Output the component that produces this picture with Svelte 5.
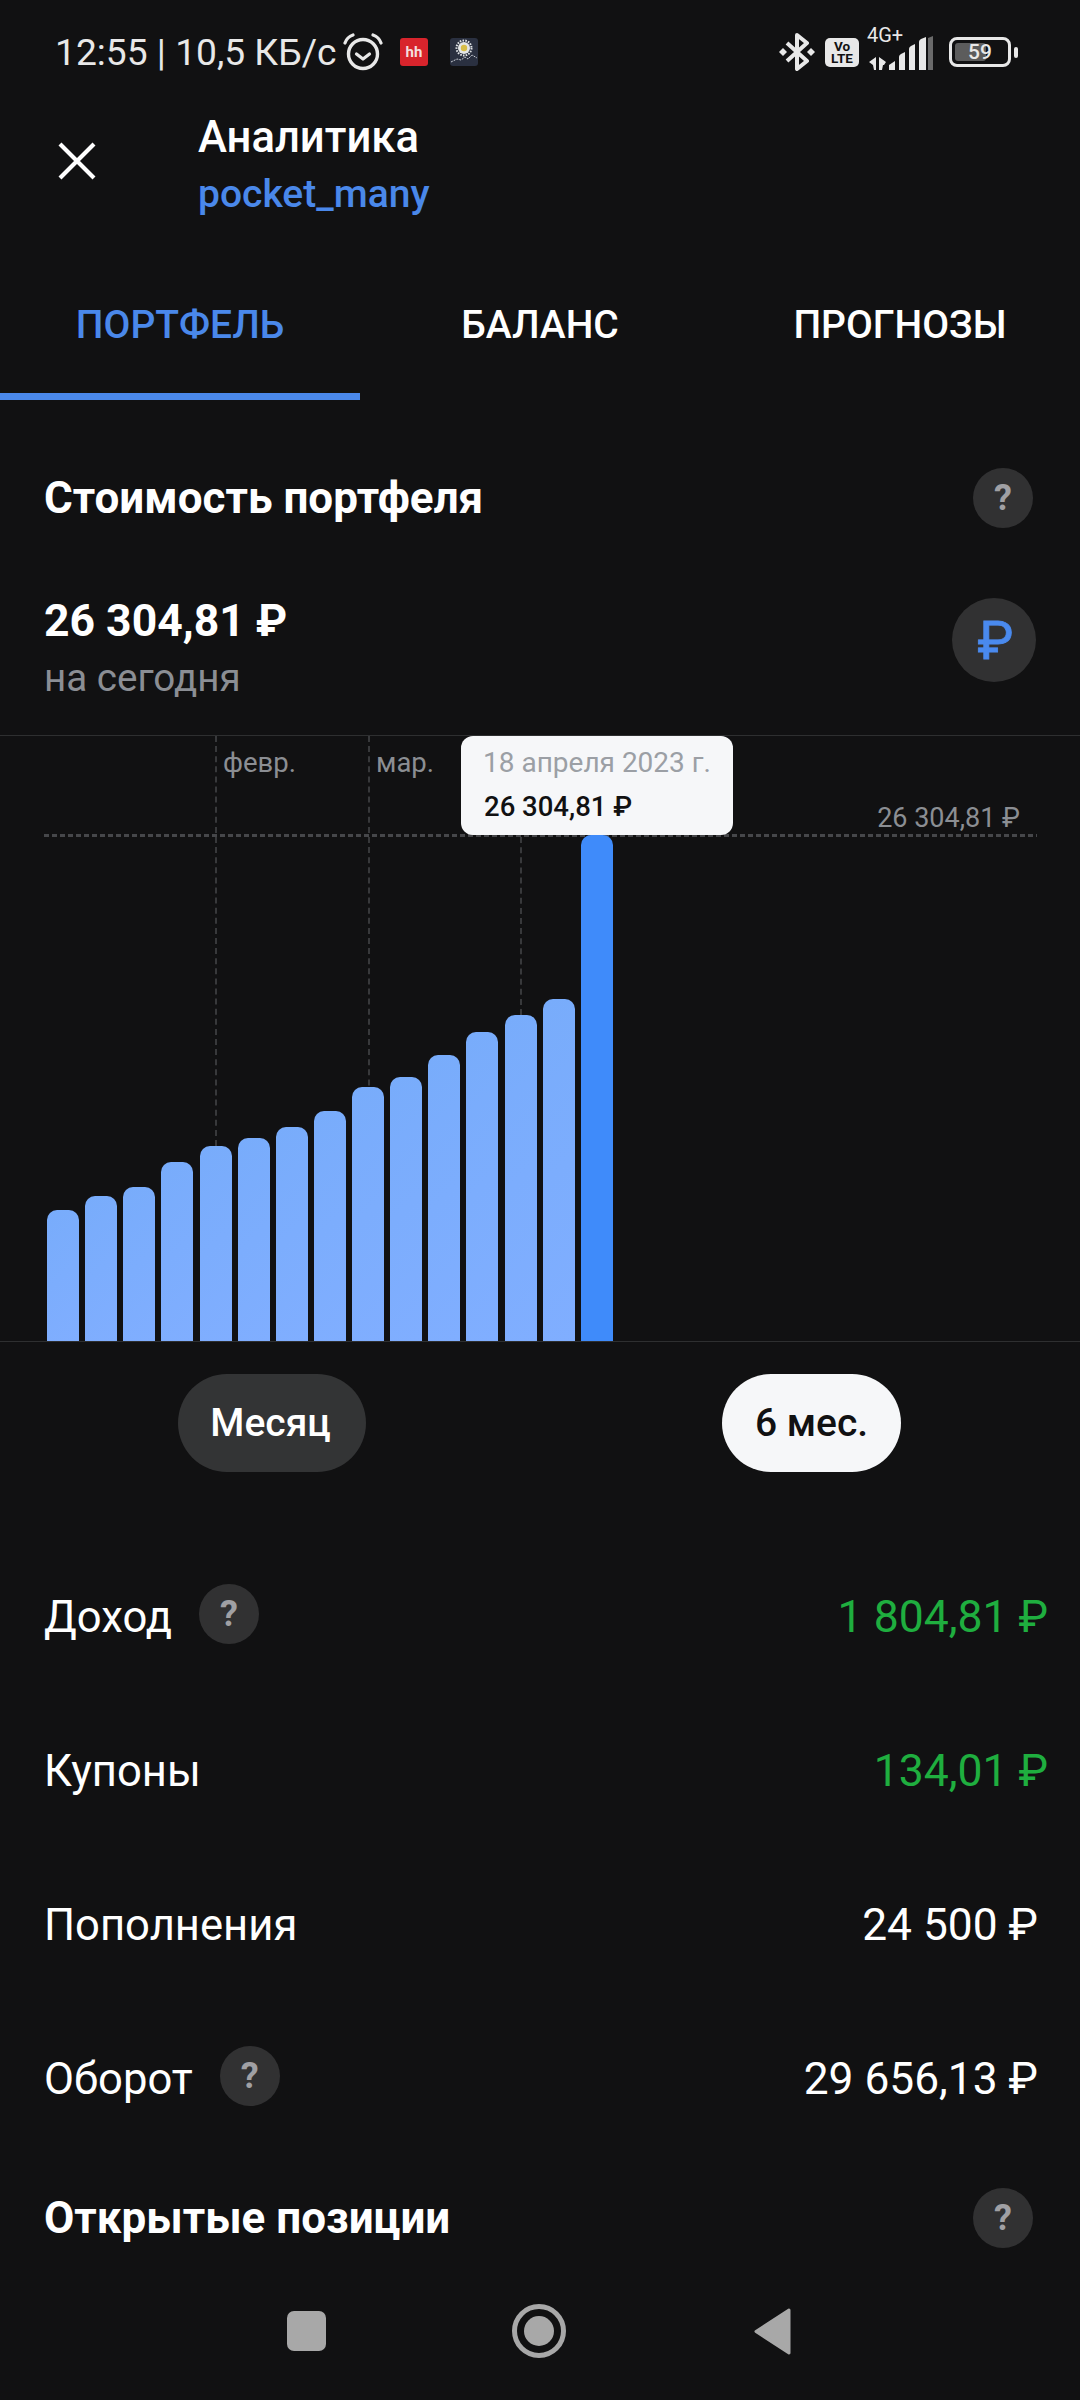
<script>
  const bars = [131, 145, 154, 179, 195, 203, 214, 230, 254, 264, 286, 309, 326, 342, 506];
  const rows = [
    { label: 'Доход', value: '1 804,81 ₽', help: true, green: true },
    { label: 'Купоны', value: '134,01 ₽', green: true },
    { label: 'Пополнения', value: '24 500 ₽' },
    { label: 'Оборот', value: '29 656,13 ₽', help: true }
  ];
  const vlines = [
    { x: 215, h: 410, label: 'февр.' },
    { x: 368, h: 410, label: 'мар.' },
    { x: 520, h: 279, label: '' }
  ];
</script>

<div class="screen">
  <div class="status">
    <span class="clock">12:55 | 10,5 КБ/с</span>
    <svg class="alarm" viewBox="0 0 40 38" width="40" height="38">
      <circle cx="20" cy="21" r="14.5" fill="none" stroke="#e8e8e8" stroke-width="3.4" />
      <path d="M13.5 21l6.5 5 6.5-5" fill="none" stroke="#e8e8e8" stroke-width="3.2" stroke-linecap="round" stroke-linejoin="round" />
      <path d="M2 10Q4 4 10 2M38 10Q36 4 30 2" fill="none" stroke="#e8e8e8" stroke-width="3.2" stroke-linecap="round" />
    </svg>
    <span class="hh">hh</span>
    <svg class="daisy" viewBox="0 0 28 28" width="28" height="28">
      <rect width="28" height="28" rx="3" fill="#2a3040" />
      <circle cx="14" cy="10" r="6" fill="#e4e6e6" />
      <circle cx="14" cy="10" r="7.500" fill="none" stroke="#dfe2e4" stroke-width="2" stroke-dasharray="1.600 1.200" />
      <circle cx="14" cy="10" r="3.200" fill="#d7bd47" />
      <path d="M1 24l6-3 4 1 4-3 3 2 4-4 5 3" fill="none" stroke="#c8ccd4" stroke-width="1" stroke-dasharray="2 1" />
    </svg>
    <span class="spacer"></span>
    <svg class="bt" viewBox="0 0 36 38" width="36" height="38">
      <path d="M8 10l20 18-10 8V2l10 8L8 28" fill="none" stroke="#e8e8e8" stroke-width="4" stroke-linejoin="round" />
      <path d="M0 19l4-4 4 4-4 4zM28 19l4-4 4 4-4 4z" fill="#e8e8e8" />
    </svg>
    <span class="volte">Vo<br />LTE</span>
    <div class="net">
      <span class="net-text">4G+</span>
      <svg viewBox="0 0 68 34" width="68" height="34" class="signal">
        <path d="M2 26l7-5v13H7l-1-5zM12 21l7 5-2 3h-1l-1 5h-3z" fill="#e8e8e8" />
        <path d="M22 34v-5l6-4v9zM32 34V21q0-2 2-3l4-2v18zM42 34V13q0-2 2-3l4-2v26zM52 34V6q0-2 2-3l5-2v33z" fill="#e8e8e8" />
        <path d="M61 34V2l5-2v34z" fill="#6a6a6a" />
      </svg>
    </div>
    <div class="battery"><span class="fill"></span><span class="pct">59</span></div>
    <span class="nub"></span>
  </div>

  <header class="head">
    <svg class="close" viewBox="0 0 38 38" width="38" height="38">
      <path d="M2 2l34 34M36 2L2 36" stroke="#fff" stroke-width="4.200" fill="none" />
    </svg>
    <div class="titles">
      <div class="title">Аналитика</div>
      <div class="sub">pocket_many</div>
    </div>
  </header>

  <nav class="tabs">
    <div class="tab active">ПОРТФЕЛЬ</div>
    <div class="tab">БАЛАНС</div>
    <div class="tab">ПРОГНОЗЫ</div>
  </nav>

  <section class="sec-title">
    <h2>Стоимость портфеля</h2>
    <span class="q">?</span>
  </section>

  <section class="total">
    <div>
      <div class="sum">26 304,81 ₽</div>
      <div class="today">на сегодня</div>
    </div>
    <span class="rub">₽</span>
  </section>

  <section class="chart">
    {#each vlines as l}
      <span class="vline" style="left:{l.x}px;height:{l.h}px"></span>
      {#if l.label}<span class="mon" style="left:{l.x + 8}px">{l.label}</span>{/if}
    {/each}
    <span class="hline"></span>
    <span class="axis-val">26 304,81 ₽</span>
    <div class="bars">
      {#each bars as h, i}
        <span class="bar" class:last={i === bars.length - 1} style="height:{h}px"></span>
      {/each}
    </div>
    <div class="tip">
      <div class="tip-date">18 апреля 2023 г.</div>
      <div class="tip-val">26 304,81 ₽</div>
    </div>
  </section>

  <div class="periods">
    <button class="pill dark">Месяц</button>
    <button class="pill light">6 мес.</button>
  </div>

  <section class="rows">
    {#each rows as r}
      <div class="row">
        <span class="row-label">{r.label}</span>
        {#if r.help}<span class="q small">?</span>{/if}
        <span class="row-val" class:green={r.green}>{r.value}</span>
      </div>
    {/each}
  </section>

  <section class="open">
    <h2>Открытые позиции</h2>
    <span class="q">?</span>
  </section>

  <footer class="navbar">
    <span class="sq"></span>
    <span class="home"><span></span></span>
    <svg viewBox="0 0 38 47" width="38" height="47">
      <path d="M35 2L2 23.500 35 45z" fill="#a8a8a8" stroke="#a8a8a8" stroke-width="3" stroke-linejoin="round" />
    </svg>
  </footer>
</div>

<style>
  :global(body) {
    margin: 0;
    background: #111112;
  }
  .screen {
    width: 1080px;
    height: 2400px;
    overflow: hidden;
    background: #111112;
    color: #fff;
    font-family: Roboto, "Noto Sans", sans-serif;
  }
  .status {
    height: 104px;
    display: flex;
    align-items: center;
    padding: 0 62px 0 55px;
    box-sizing: border-box;
    color: #e8e8e8;
  }
  .clock {
    font-size: 37.200px;
    white-space: nowrap;
    width: 288px;
  }
  .alarm { margin-right: 17px; }
  .hh {
    width: 28px;
    height: 28px;
    border-radius: 3px;
    background: #d8242c;
    color: #f4dede;
    font-size: 15px;
    font-weight: 700;
    display: flex;
    align-items: center;
    justify-content: center;
    margin-right: 22px;
  }
  .spacer { flex: 1; }
  .bt { margin-right: 10px; }
  .volte {
    width: 34px;
    height: 29px;
    border-radius: 5px;
    background: #e8e8e8;
    color: #111112;
    font-size: 13.500px;
    line-height: 12.500px;
    font-weight: 700;
    text-align: center;
    padding-top: 2px;
    box-sizing: border-box;
    margin-right: 8px;
  }
  .net {
    position: relative;
    width: 68px;
    height: 40px;
    margin-right: 14px;
  }
  .net-text {
    position: absolute;
    left: 0;
    top: -7px;
    font-size: 20px;
    line-height: 20px;
  }
  .signal {
    position: absolute;
    left: 0;
    top: 4px;
  }
  .battery {
    position: relative;
    width: 62px;
    height: 30px;
    box-sizing: border-box;
    border: 3px solid #e8e8e8;
    border-radius: 8px;
  }
  .fill {
    position: absolute;
    left: 3px;
    top: 3px;
    bottom: 3px;
    width: 31px;
    background: #5c5c5c;
    border-radius: 3px;
  }
  .pct {
    position: absolute;
    inset: 0;
    text-align: center;
    font-size: 21px;
    line-height: 24px;
    font-weight: 500;
  }
  .nub {
    width: 4px;
    height: 11px;
    margin-left: 3px;
    border-radius: 2px;
    background: #e8e8e8;
  }
  .head {
    height: 152px;
    display: flex;
    align-items: flex-start;
    box-sizing: border-box;
    padding-left: 58px;
  }
  .close { margin-top: 38px; }
  .titles { margin-left: 102px; }
  .title {
    font-size: 43.600px;
    font-weight: 500;
    line-height: 50px;
    margin-top: 9px;
  }
  .sub {
    font-size: 39px;
    font-weight: 500;
    line-height: 46px;
    margin-top: 8px;
    color: #4a88ea;
  }
  .tabs {
    height: 144px;
    display: grid;
    grid-template-columns: repeat(3, 360px);
  }
  .tab {
    font-size: 39px;
    font-weight: 500;
    text-align: center;
    line-height: 44px;
    padding-top: 47px;
    box-sizing: border-box;
  }
  .tab.active {
    color: #4a88ea;
    border-bottom: 7px solid #4a88ea;
  }
  .sec-title {
    height: 60px;
    margin-top: 68px;
    display: flex;
    align-items: center;
    justify-content: space-between;
    padding: 0 47px 0 44px;
  }
  h2 {
    margin: 0;
    font-size: 44px;
    font-weight: 700;
    line-height: 50px;
  }
  .q {
    width: 60px;
    height: 60px;
    border-radius: 50%;
    background: #313132;
    color: #a0a0a4;
    display: flex;
    align-items: center;
    justify-content: center;
    font-size: 36px;
    font-weight: 700;
    flex: none;
  }
  .total {
    height: 208px;
    box-sizing: border-box;
    display: flex;
    justify-content: space-between;
    align-items: flex-start;
    padding: 68px 44px 0 44px;
    border-bottom: 1px solid #2e2f30;
  }
  .sum {
    font-size: 44.500px;
    font-weight: 700;
    line-height: 50px;
  }
  .today {
    font-size: 38.600px;
    line-height: 46px;
    margin-top: 9px;
    color: #8b8e94;
  }
  .rub {
    width: 84px;
    height: 84px;
    box-sizing: border-box;
    padding-left: 3px;
    margin-top: 2px;
    border-radius: 50%;
    background: #313132;
    color: #4a8aee;
    display: flex;
    align-items: center;
    justify-content: center;
    font-size: 54px;
    font-weight: 400;
    -webkit-text-stroke: 0.8px #4a8aee;
  }
  .chart {
    position: relative;
    height: 606px;
    box-sizing: border-box;
    border-bottom: 1px solid #2e2f30;
  }
  .bars {
    position: absolute;
    left: 47px;
    bottom: 0;
    display: flex;
    align-items: flex-end;
    gap: 6.140px;
  }
  .bar {
    width: 32px;
    border-radius: 10px 10px 0 0;
    background: linear-gradient(135deg, #78acfb, #80aeff);
  }
  .bar.last { background: #3f8bfa; }
  .vline {
    position: absolute;
    top: 0;
    width: 0;
    border-left: 2px dashed #38393b;
  }
  .mon {
    position: absolute;
    top: 7px;
    font-size: 27.500px;
    line-height: 40px;
    color: #8b8e93;
  }
  .hline {
    position: absolute;
    left: 44px;
    width: 993px;
    top: 98px;
    height: 3px;
    background: repeating-linear-gradient(90deg, #46474a 0 5px, transparent 5px 8px);
  }
  .axis-val {
    position: absolute;
    right: 60px;
    top: 62px;
    font-size: 27px;
    line-height: 40px;
    color: #8b8e93;
  }
  .tip {
    position: absolute;
    left: 461px;
    top: 0;
    width: 272px;
    height: 99px;
    box-sizing: border-box;
    padding: 7px 0 0 22px;
    background: #f6f7f9;
    border-radius: 12px;
    white-space: nowrap;
  }
  .tip-date {
    font-size: 28px;
    line-height: 40px;
    color: #9b9fa5;
  }
  .tip-val {
    font-size: 27.500px;
    font-weight: 500;
    line-height: 40px;
    margin-top: 4px;
    margin-left: 1px;
    color: #111112;
  }
  .periods {
    height: 198px;
    box-sizing: border-box;
    padding: 32px 0 0 0;
    display: grid;
    grid-template-columns: 540px 540px;
    justify-items: center;
    align-items: start;
  }
  .pill {
    height: 98px;
    border: 0;
    border-radius: 49px;
    font-family: inherit;
    font-size: 39px;
    font-weight: 500;
  }
  .dark {
    background: #333435;
    color: #fff;
    width: 188px;
    margin-left: 3px;
    padding: 0 2px 0 0;
  }
  .light {
    background: #f6f7f9;
    color: #111112;
    width: 179px;
    padding: 0;
    margin-left: 3px;
  }
  .row {
    height: 154px;
    display: flex;
    align-items: center;
    padding: 0 42px 0 44px;
    font-size: 43.600px;
  }
  .q.small { margin-left: 27px; margin-top: -6px; }
  .row-val {
    margin-left: auto;
    font-size: 44.300px;
  }
  .green {
    font-size: 44.500px;
    color: #1fae3f;
    margin-right: -10px;
  }
  .open {
    height: 124px;
    display: flex;
    align-items: center;
    justify-content: space-between;
    padding: 0 47px 0 44px;
  }
  .navbar {
    height: 120px;
    position: relative;
    display: flex;
    align-items: center;
    padding-left: 287px;
    padding-bottom: 18px;
    box-sizing: border-box;
  }
  .sq {
    width: 39px;
    height: 40px;
    border-radius: 7px;
    background: #a8a8a8;
  }
  .home {
    width: 54px;
    height: 54px;
    margin-left: 186px;
    margin-right: 188px;
    box-sizing: border-box;
    border: 5px solid #a8a8a8;
    border-radius: 50%;
    display: flex;
    align-items: center;
    justify-content: center;
  }
  .home span {
    width: 30px;
    height: 30px;
    border-radius: 50%;
    background: #a8a8a8;
  }
</style>
